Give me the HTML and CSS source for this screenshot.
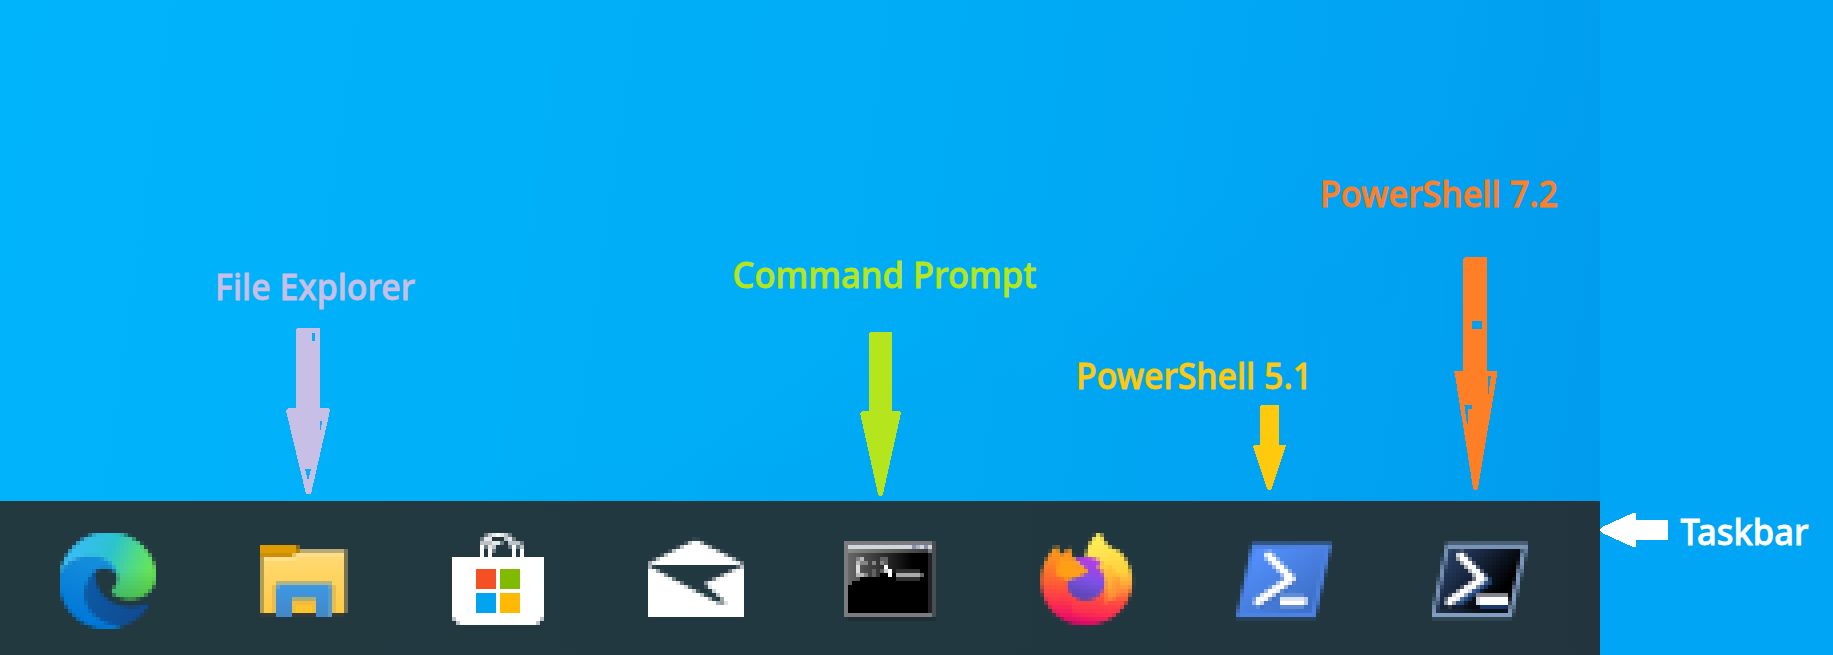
FILE: index.html
```html
<!DOCTYPE html>
<html lang="en">
<head>
<meta charset="utf-8">
<title>Taskbar shortcuts</title>
<link rel="stylesheet" href="styles.css">
</head>
<body>
<main class="stage">
  <section class="screen">
    <div class="wallpaper"></div>
    <nav class="taskbar">
      <!-- Edge -->
      <svg class="icon" width="96" height="96">
        <defs>
          <!-- Samples one pixel per 4px cell and spreads it over the cell -->
          <filter id="px" filterUnits="userSpaceOnUse" x="0" y="0" width="96" height="96" color-interpolation-filters="sRGB">
            <feGaussianBlur in="SourceGraphic" stdDeviation="1.1" result="soft"/>
            <feFlood x="2" y="2" width="1" height="1" flood-color="#000" result="pt"/>
            <feOffset in="pt" dx="0" dy="0" x="0" y="0" width="4" height="4"/>
            <feTile x="0" y="0" width="96" height="96" result="grid"/>
            <feComposite in="soft" in2="grid" operator="in" result="a"/>
            <feOffset in="a" dx="1" dy="0" result="a1"/>
            <feMerge result="b"><feMergeNode in="a"/><feMergeNode in="a1"/></feMerge>
            <feOffset in="b" dx="-2" dy="0" result="b1"/>
            <feMerge result="c"><feMergeNode in="b"/><feMergeNode in="b1"/></feMerge>
            <feOffset in="c" dx="0" dy="1" result="c1"/>
            <feMerge result="d"><feMergeNode in="c"/><feMergeNode in="c1"/></feMerge>
            <feOffset in="d" dx="0" dy="-2" result="d1"/>
            <feMerge><feMergeNode in="d"/><feMergeNode in="d1"/></feMerge>
          </filter>
          <linearGradient id="e1" gradientUnits="userSpaceOnUse" x1="3" y1="5" x2="22" y2="12">
            <stop offset="0" stop-color="#37bdf5"/><stop offset=".45" stop-color="#2cc3cf"/><stop offset=".75" stop-color="#4fd98a"/><stop offset="1" stop-color="#68e557"/>
          </linearGradient>
          <linearGradient id="e1b" gradientUnits="userSpaceOnUse" x1="0" y1="9" x2="0" y2="17">
            <stop offset="0" stop-color="#3fae4a" stop-opacity="0"/><stop offset="1" stop-color="#3fae4a" stop-opacity=".75"/>
          </linearGradient>
          <linearGradient id="e2" gradientUnits="userSpaceOnUse" x1="10" y1="6" x2="4" y2="21">
            <stop offset="0" stop-color="#1690dc"/><stop offset="1" stop-color="#0078d8"/>
          </linearGradient>
          <linearGradient id="e3" gradientUnits="userSpaceOnUse" x1="7" y1="14" x2="21" y2="21">
            <stop offset="0" stop-color="#0c59a4"/><stop offset="1" stop-color="#114a90"/>
          </linearGradient>
        </defs>
        <g filter="url(#px)"><g transform="scale(4)">
          <path fill="url(#e1)" d="M0 11C.5 4.500 6-.2 12-.2 19-.2 24.200 5 24.200 10.700c0 3.800-3 6-6.500 6-2.700 0-4.500-1-4.700-2 0-.8 1.500-1.200 1.500-3.200C14.500 9 12 6 8 6 4 6 1 8 0 11z"/>
          <path fill="url(#e1b)" d="M14 9h10.200v1.700c0 3.800-3 6-6.500 6-2.700 0-4.500-1-4.700-2 0-.8 1.500-1.200 1.500-3.200z"/>
          <path fill="url(#e2)" d="M0 12C0 8.800 4 6 8 6c3.500 0 6 2 6 4.300-.8-1-2-1.300-3-1.300-2 0-4 2-4 5 0 5 4 9 9 9.300-1.400.6-2.600.9-4 .9C5 24.200-.2 18.800-.2 12z"/>
          <path fill="url(#e3)" d="M8.500 10C6.800 12 6 14 6.300 16.300 7 20.500 11 23.300 16 23.300c3-.9 5-2.800 6.400-5.200l-.9-.2c-5 2-12-.5-12.500-6.900z"/>
        </g></g>
      </svg>

      <!-- File Explorer -->
      <svg class="icon" viewBox="0 0 24 24" shape-rendering="crispEdges">
        <defs>
          <linearGradient id="f1" x1="0" y1="0" x2="0" y2="1"><stop offset="0" stop-color="#ffda75"/><stop offset="1" stop-color="#ffca42"/></linearGradient>
          <linearGradient id="f2" x1="0" y1="0" x2="0" y2="1"><stop offset="0" stop-color="#3c99e5"/><stop offset="1" stop-color="#4387c7"/></linearGradient>
        </defs>
        <path fill="#b9ab73" d="M10 4h12v1H10z"/>
        <path fill="#b39e53" d="M1 6h1v14H1z"/>
        <path fill="url(#f1)" d="M2 5h19v15H2z"/>
        <path fill="#767252" d="M22 4h1v16h-1z"/>
        <path fill="url(#f1)" d="M21 5h1v15h-1z"/>
        <path fill="#ffdf8c" d="M2 6h8v1H2zM10 5h12v1H10z"/>
        <path fill="#df9b00" d="M1 3h9v3H1z"/>
        <path fill="#ca8f09" d="M1 5h8v1H1z"/>
        <path fill="#8a6a18" d="M10 3h1v1h-1z"/>
        <path fill="#eac060" d="M9 5h1v1H9z"/>
        <path fill="#b78208" d="M10 4h1v1h-1z"/>
        <path fill="#353b36" d="M1 20h4v1H1zM19 20h3v1h-3zM9 20h6v1H9z"/>
        <path fill="#e5bd53" d="M4 13h1v7H4zM19 13h1v7h-1z"/>
        <path fill="#b2b583" d="M5 12h14v1H5z"/>
        <path fill="url(#f2)" d="M5 13h14v8h-4v-5H9v5H5z"/>
        <path fill="#6da3c2" d="M5 13h1v1H5zM18 13h1v1h-1z"/>
        <path fill="#5a9ac3" d="M18 14h1v7h-1z"/>
        <path fill="#adae72" d="M9 16h6v1H9z"/>
        <path fill="#f2bd3f" d="M9 17h6v3H9z"/>
        <path fill="#ffc52e" d="M10 18h4v2h-4z"/>
      </svg>

      <!-- Store -->
      <svg class="icon" viewBox="0 0 24 24" shape-rendering="crispEdges">
        <path fill="#fff" d="M0 6h23v15h-1v1h-1v1H2v-1H1v-1H0zM7 4h1v2H7zM9 4h1v2H9zM15 3h1v3h-1zM17 4h1v2h-1zM11 0h1v1h-1zM7 3h1v1H7z"/>
        <path fill="#e6e9e9" d="M10 0h1v1h-1zM12 0h1v1h-1zM8 1h1v1H8zM9 1h1v1H9zM14 1h1v1h-1zM10 2h2v1h-2zM9 3h1v1H9z"/>
        <path fill="#bcc2c5" d="M9 0h1v1H9zM13 0h1v1h-1zM7 2h1v1H7zM8 2h1v1H8zM14 2h1v1h-1zM9 2h1v1H9zM10 3h1v1h-1zM16 2h1v1h-1zM17 3h1v1h-1zM15 2h1v1h-1zM13 1h1v1h-1zM0 21h1v1H0zM1 22h1v1H1zM21 22h1v1h-1zM22 21h1v1h-1z"/>
        <path fill="#fff" d="M1 21h1v1H1zM21 21h1v1h-1z"/>
        <path fill="#6d7a80" d="M8 0h1v1H8zM14 0h1v1h-1zM7 1h1v1H7zM15 1h1v1h-1zM17 2h1v1h-1zM8 3h1v1H8zM12 2h1v1h-1zM14 3h1v1h-1zM16 3h1v1h-1zM10 4h1v1h-1z"/>
        <path fill="#f45023" d="M6 9h5v5H6z"/><path fill="#80ba01" d="M12 9h5v5h-5z"/>
        <path fill="#02a4ef" d="M6 15h5v5H6z"/><path fill="#ffb902" d="M12 15h5v5h-5z"/>
      </svg>

      <!-- Mail -->
      <svg class="icon" width="96" height="96">
        <g filter="url(#px)"><g transform="scale(4)" fill="#fff">
          <path d="M.3 7.600 11.500 2h1L23.700 7.600V8H.3z"/>
          <path d="M0 8.200 17.700 17.600h2L14.200 12.800 24 8.200V20.500H0z"/>
        </g></g>
        <path fill="#223840" d="M8 32h80v4H8z"/>
        <path fill="#fff" d="M8 28h80v4H8zM0 36h4v48H0zM92 36h4v48h-4zM0 72h96v12H0z"/>
      </svg>

      <!-- Command Prompt -->
      <svg class="icon" viewBox="0 0 24 24" shape-rendering="crispEdges">
        <defs>
          <linearGradient id="c1" x1="0" y1="0" x2="1" y2="0"><stop offset="0" stop-color="#686868"/><stop offset=".4" stop-color="#383838"/><stop offset=".9" stop-color="#000"/></linearGradient>
          <linearGradient id="c2" x1="0" y1="0" x2="1" y2="0"><stop offset="0" stop-color="#8a8a8a"/><stop offset="1" stop-color="#3d3d3d"/></linearGradient>
        </defs>
        <path fill="#7b7c80" d="M0 2h22v19H0z"/>
        <path fill="#474f55" d="M22 2h1v19h-1z"/>
        <path fill="#1d2f35" d="M1 21h22v1H1z"/>
        <path fill="#d2d6dd" d="M1 3h21v1H1z"/>
        <path fill="#8391aa" d="M17 3h1v1h-1zM20 3h1v1h-1z"/><path fill="#a9b4c7" d="M18 3h1v1h-1z"/>
        <path fill="url(#c2)" d="M1 4h20v1H1z"/>
        <path fill="#000" d="M1 5h20v15H1z"/>
        <path fill="url(#c1)" d="M1 5h18v3h-1v1h-5v1H9v1H4v1H2v1H1z"/>
        <path fill="#222327" d="M21 5h1v15h-1z"/>
        <path fill="#b8b8b8" d="M3 7h1v4H3zM4 6h1v1H4zM4 10h1v1H4z"/>
        <path fill="#dcdcdc" d="M3 8h1v2H3z"/>
        <path fill="#858585" d="M3 6h1v1H3zM5 7h1v1H5zM5 10h1v1H5zM4 7h1v1H4zM7 7h1v1H7zM9 7h1v1H9z"/>
        <path fill="#626262" d="M7 10h1v1H7zM7 9h1v1H7zM9 6h2v1H9zM10 7h1v1h-1zM9 9h1v1H9z"/>
        <path fill="#fff" d="M10 8h1v1h-1zM11 9h1v2h-1z"/>
        <path fill="#cfcfcf" d="M10 9h1v1h-1z"/>
        <path fill="#aaa" d="M13 10h6v1h-6z"/><path fill="#666" d="M19 10h1v1h-1z"/><path fill="#303030" d="M13 9h6v1h-6zM13 11h6v1h-6z"/>
      </svg>

      <!-- Firefox -->
      <svg class="icon" width="96" height="96">
        <defs>
          <linearGradient id="x1" gradientUnits="userSpaceOnUse" x1="14" y1="2" x2="11" y2="23">
            <stop offset="0" stop-color="#ffe34a"/><stop offset=".3" stop-color="#ffbd3c"/><stop offset=".52" stop-color="#ff8038"/><stop offset=".7" stop-color="#ff4740"/><stop offset=".86" stop-color="#fc2e50"/><stop offset="1" stop-color="#dd046c"/>
          </linearGradient>
          <linearGradient id="x2" gradientUnits="userSpaceOnUse" x1="5" y1="5" x2="5" y2="22">
            <stop offset="0" stop-color="#ff8f18"/><stop offset=".45" stop-color="#ff5a34"/><stop offset=".75" stop-color="#fb2d50"/><stop offset="1" stop-color="#e5096c"/>
          </linearGradient>
          <linearGradient id="x3" gradientUnits="userSpaceOnUse" x1="13" y1="6" x2="10" y2="17">
            <stop offset="0" stop-color="#bd38e5"/><stop offset=".5" stop-color="#8150e8"/><stop offset="1" stop-color="#5145ad"/>
          </linearGradient>
          <linearGradient id="x4" gradientUnits="userSpaceOnUse" x1="16" y1="1" x2="20" y2="17">
            <stop offset="0" stop-color="#fff05a"/><stop offset=".6" stop-color="#ffd13c"/><stop offset="1" stop-color="#ff983a" stop-opacity="0"/>
          </linearGradient>
        </defs>
        <g filter="url(#px)"><g transform="scale(4)">
          <path fill="url(#x1)" d="M4.300 3.200 5.300 5.600 7.600 3.800 8.300 6.200 11 7h.5C11.500 4 12.800 1.200 15.300-.2 16 2.800 18 4 20 4.600c2 2 3.200 4.800 3.200 7.600 0 6.200-5.200 11-11.400 11S.4 18.300.4 12.100C.4 8.300 2 5.600 4.300 3.200z"/>
          <path fill="url(#x2)" d="M4.300 3.200 5.300 5.600 7.600 3.800 8.300 6.200 9 7.500 12 10 7 13l.8 4.500L9 23C4 21.800.4 18 .4 12.100.4 8.300 2 5.600 4.300 3.200z" opacity=".85"/>
          <path fill="url(#x4)" d="M15.300-.2C16 2.800 18 4 20 4.600c2 2 3.200 4.800 3.200 7.600 0 2-.6 3.600-1.400 5L18 18l-1.500-4V9L11.500 7C11.500 4 12.800 1.200 15.300-.2z"/>
          <path fill="url(#x3)" d="M8.800 6.600C10.800 5.800 13.500 6 15.700 7.400L14.300 8.200C16 10 16.700 12 16.200 13.700 15.300 16 13.500 17 11.500 17 9 17 7 15.300 7 13c0-1.300 1-1.700 3.200-2L12 9.400z"/>
          <path fill="#ff9f15" d="M5 6.500 7 6.500 9 7.400 10 9H12V10L9.800 11.100 7 12 4 10.500z"/>
          <path fill="#ffab31" opacity=".55" d="M16.800 7.500 20 11 19.600 15.500 16.500 18 16.700 13z"/>
          <path fill="#ff8c39" opacity=".6" d="M18.500 11.500h1.600v3l-1.600 3z"/>
        </g></g>
      </svg>

      <!-- PowerShell 5.1 -->
      <svg class="icon" width="96" height="96">
        <defs>
          <linearGradient id="p1" x1="0" y1="0" x2="1" y2="1"><stop offset=".1" stop-color="#5491ff"/><stop offset=".85" stop-color="#3d6fc6"/></linearGradient>
          <linearGradient id="p2" x1="0" y1="0" x2="1" y2=".6"><stop offset="0" stop-color="#2f4c73"/><stop offset=".4" stop-color="#1a2a44"/><stop offset=".85" stop-color="#000"/></linearGradient>
        </defs>
        <g filter="url(#px)"><g transform="scale(4)">
          <path fill="#4b82e3" d="M4.100 2.700H24.100L20 21.300H.1z"/>
          <path fill="url(#p1)" d="M4.800 4H22.500L19 20H1.500z"/>
          <path fill="none" stroke="#3e69b4" stroke-width="1.500" opacity=".6" d="m8.600 6.600 6 5.600L6 18.600"/>
          <path fill="none" stroke="#fff" stroke-width="2" stroke-linecap="round" stroke-linejoin="round" d="M8.300 5.800 13.900 11.500 5.600 17.300"/>
        </g></g>
        <path shape-rendering="crispEdges" fill="#dbe6fb" d="M44 64h24v4H44z"/>
        <path shape-rendering="crispEdges" fill="#fff" d="M44 68h24v4H44z"/>
        <path shape-rendering="crispEdges" fill="#5f8bd9" d="M44 60h24v4H44zM44 72h24v4H44z"/>
        <path shape-rendering="crispEdges" fill="#b8cbf1" d="M68 64h4v8h-4z"/>
      </svg>

      <!-- PowerShell 7.2 -->
      <svg class="icon" width="96" height="96">
        <g filter="url(#px)"><g transform="scale(4)">
          <path fill="#829dc2" d="M3.700 2.700H24.200L20.100 21.300H-.2z"/>
          <path fill="url(#p2)" d="M4.300 4H22.700L19.100 20H1.100z"/>
          <path fill="none" stroke="#274e88" stroke-width="1.600" d="m8.500 7 5.700 5.200L6.500 18"/>
          <path fill="#173a70" d="M12 18h7v1.200h-7z"/>
          <path fill="none" stroke="#fff" stroke-width="2" stroke-linecap="round" stroke-linejoin="round" d="M7.300 5.900 12.700 11.500 4.500 17.300"/>
        </g></g>
        <path shape-rendering="crispEdges" fill="#838589" d="M44 60h32v4H44z"/>
        <path shape-rendering="crispEdges" fill="#fff" d="M44 64h32v8H44z"/>
        <path shape-rendering="crispEdges" fill="#cbd2dc" d="M44 64h4v8h-4z"/>
      </svg>
    </nav>
  </section>
  <aside class="side"></aside>

  <!-- Annotation labels and arrows laid over the desktop -->
  <svg class="notes" width="1833" height="655" viewBox="0 0 1833 655">
    <g class="lavender">
      <text x="215" y="300" textLength="200" lengthAdjust="spacingAndGlyphs">File Explorer</text>
      <path class="arrow" fill-rule="evenodd" d="M297 328h22l1 1v79h8l2 2-1 5-18 79h-5l-19-79-1-5 2-2h8v-79zM312 333v8h3v-8zM320 421v9h1v-5h1v-4zM305 469v2h1v4h1v4h2v-4h1v-4h1v-2z"/>
    </g>
    <g class="lime">
      <text x="732.500" y="288" textLength="304" lengthAdjust="spacingAndGlyphs">Command Prompt</text>
      <path class="arrow" d="M870 332h21l1 1v78h7l2 2-18 81-1 2h-3l-1-2-18-81 2-2h7v-78z"/>
    </g>
    <g class="gold">
      <text x="1076" y="389" textLength="236" lengthAdjust="spacingAndGlyphs">PowerShell 5.1</text>
      <path class="arrow" d="M1261 405h17l1 1v39h6l1 1-1 3-13 39-1 2h-3l-1-2-13-39-1-3 1-1h6v-39z"/>
    </g>
    <g class="orange">
      <text x="1320" y="207" textLength="238" lengthAdjust="spacingAndGlyphs">PowerShell 7.2</text>
      <path class="arrow" fill-rule="evenodd" d="M1465 257h21l1 1v113h10v4l-19 113-1 2h-3l-1-2-18-113-1-4h9V259zM1472 321v8h10v-8zM1488 376v18h1v-8h1v-7h1v-3zM1464 405v1h1v8h1v7h1v3h1v-15h4v-4z"/>
    </g>
    <g class="white">
      <text x="1680.500" y="545" textLength="128" lengthAdjust="spacingAndGlyphs">Taskbar</text>
      <path class="arrow" stroke="none" d="M1599 530 1602 527 1633 513h2l1 1v6h31l1 1v18l-1 1h-31v6l-1 1h-2L1602 533z"/>
    </g>
  </svg>
</main>
</body>
</html>
```
FILE: styles.css
```css
body {
  margin: 0;
}

.stage {
  position: relative;
  display: flex;
  width: 1833px;
  height: 655px;
  overflow: hidden;
}

.screen {
  display: flex;
  flex-direction: column;
  width: 1600px;
}

.wallpaper {
  flex: 1;
  background:
    linear-gradient(159deg, transparent 60%, rgba(0, 150, 230, 0.12) 70%, rgba(0, 150, 230, 0.1) 100%),
    linear-gradient(98deg, #00b4fb 0%, #00b0f8 30%, #00abf5 60%, #01a2f2 88%, #019cee 100%);
}

.taskbar {
  display: flex;
  gap: 100px;
  box-sizing: border-box;
  height: 154px;
  padding: 32px 0 0 60px;
  background: linear-gradient(90deg, #223940, #213840 60%, #22353f);
}

.icon {
  display: block;
  flex: none;
  width: 96px;
  height: 96px;
}

.side {
  flex: 1;
  background: #00a6f5;
}

.notes {
  position: absolute;
  inset: 0;
  font: 500 36px "Noto Sans", "Open Sans", sans-serif;
}

.notes text {
  stroke: currentColor;
  stroke-width: 0.8px;
  fill: currentColor;
}

.arrow {
  fill: currentColor;
  shape-rendering: crispEdges;
}

.lavender { color: #c8bfe7; }
.lime { color: #b5e61d; }
.gold { color: #ffc90e; }
.orange { color: #ff7f27; }
.white { color: #fff; }
```
